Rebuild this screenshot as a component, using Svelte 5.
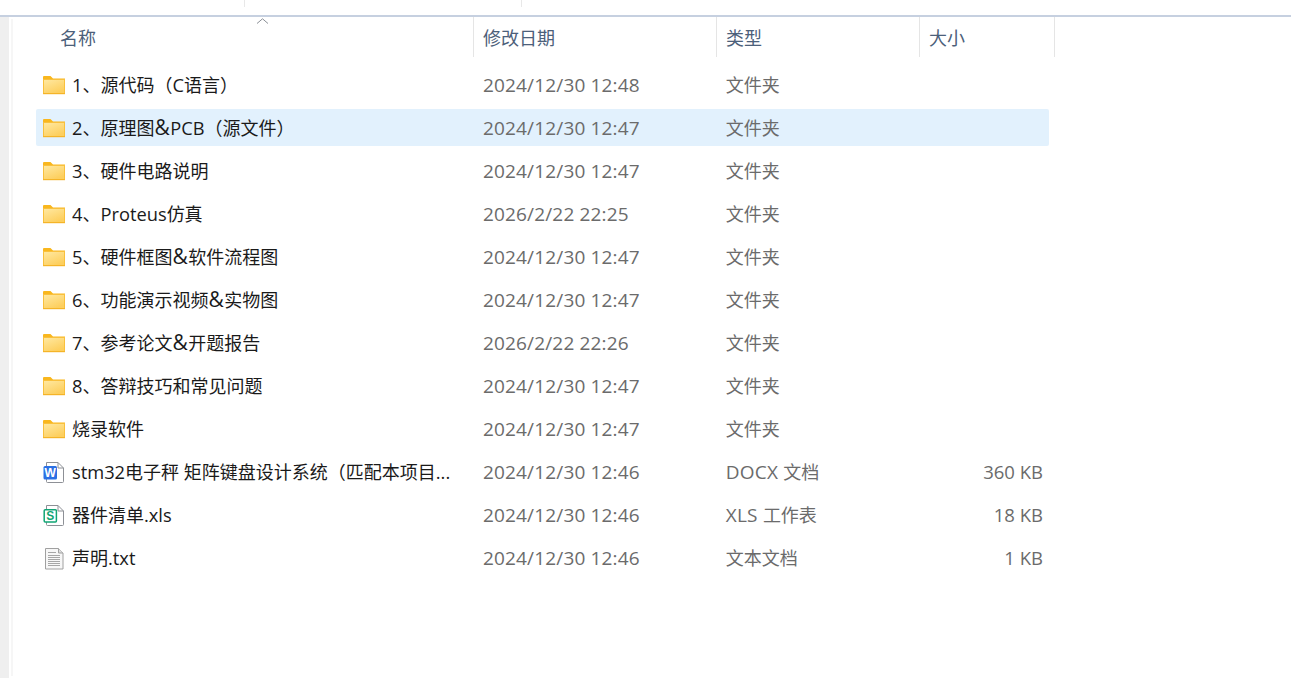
<script>
const rows = [
  { name: '1、源代码（C语言）', date: '2024/12/30 12:48', type: '文件夹', icon: 'folder' },
  { name: '2、原理图&PCB（源文件）', date: '2024/12/30 12:47', type: '文件夹', icon: 'folder', selected: true },
  { name: '3、硬件电路说明', date: '2024/12/30 12:47', type: '文件夹', icon: 'folder' },
  { name: '4、Proteus仿真', date: '2026/2/22 22:25', type: '文件夹', icon: 'folder' },
  { name: '5、硬件框图&软件流程图', date: '2024/12/30 12:47', type: '文件夹', icon: 'folder' },
  { name: '6、功能演示视频&实物图', date: '2024/12/30 12:47', type: '文件夹', icon: 'folder' },
  { name: '7、参考论文&开题报告', date: '2026/2/22 22:26', type: '文件夹', icon: 'folder' },
  { name: '8、答辩技巧和常见问题', date: '2024/12/30 12:47', type: '文件夹', icon: 'folder' },
  { name: '烧录软件', date: '2024/12/30 12:47', type: '文件夹', icon: 'folder' },
  { name: 'stm32电子秤 矩阵键盘设计系统（匹配本项目...', date: '2024/12/30 12:46', type: 'DOCX 文档', size: '360 KB', icon: 'word' },
  { name: '器件清单.xls', date: '2024/12/30 12:46', type: 'XLS 工作表', size: '18 KB', icon: 'sheet' },
  { name: '声明.txt', date: '2024/12/30 12:46', type: '文本文档', size: '1 KB', icon: 'text' }
];

// latin glyphs run a little wider than the cjk ones
const runs = (text) => text.match(/&|[\x20-\x25\x27-\x7e]+|[^\x20-\x7e]+/g) ?? [];
const isLatin = (part) => /^[\x20-\x7e]/.test(part);
</script>

{#snippet mixed(text)}
  <span class="strut"></span>{#each runs(text) as part}{#if isLatin(part)}<span class="latin" class:amp={part === '&'}>{part}</span>{:else}{part}{/if}{/each}
{/snippet}

<div class="window">
  <div class="toolbar">
    <span class="tick first"></span>
    <span class="tick second"></span>
  </div>
  <div class="body">
    <div class="gutter"></div>
    <div class="main">
      <div class="header">
        <div class="col name head">
          名称
          <svg class="sort" width="13" height="6" viewBox="0 0 13 6"><path d="M1 5.5 6.5 .8 12 5.5" fill="none" stroke="#8a8f96" stroke-width="1"/></svg>
        </div>
        <div class="col date head"><span class="strut"></span>修改日期</div>
        <div class="col type head"><span class="strut"></span>类型</div>
        <div class="col size head"><span class="strut"></span>大小</div>
      </div>
      <div class="list">
        {#each rows as row}
          <div class="row" class:selected={row.selected}>
            <div class="file">
              {#if row.icon === 'folder'}
                <svg width="22" height="25" viewBox="0 0 22 25">
                  <defs>
                    <linearGradient id="folder-fill" x1="0" y1="0" x2="0.6" y2="1">
                      <stop offset="0" stop-color="#ffe8a0"/>
                      <stop offset="1" stop-color="#fdcf5e"/>
                    </linearGradient>
                  </defs>
                  <path d="M0 5a1 1 0 0 1 1-1h6.5l2.5 2.5h12v2H0z" fill="#f9b71e"/>
                  <rect y="7" width="22" height="15" fill="#f9c03c"/>
                  <rect x="1" y="8" width="20" height="13" fill="url(#folder-fill)"/>
                  <rect y="21" width="22" height="1.2" fill="#f5b428"/>
                </svg>
              {:else if row.icon === 'word'}
                <svg width="22" height="25" viewBox="0 0 22 25">
                  <path d="M3.5 3.5h11.5l5.5 5.5v13.5a1 1 0 0 1-1 1h-15a1 1 0 0 1-1-1z" fill="#fff" stroke="#8d9096"/>
                  <path d="M15 3.5v5.5h5.5" fill="none" stroke="#8d9096"/>
                  <rect x=".5" y="7" width="13.5" height="13.5" rx="1.5" fill="#2b70e4"/>
                  <text x="7.2" y="17.6" class="badge">W</text>
                </svg>
              {:else if row.icon === 'sheet'}
                <svg width="22" height="25" viewBox="0 0 22 25">
                  <path d="M3.5 3.5h11.5l5.5 5.5v13.5a1 1 0 0 1-1 1h-15a1 1 0 0 1-1-1z" fill="#fff" stroke="#8d9096"/>
                  <path d="M15 3.5v5.5h5.5" fill="none" stroke="#8d9096"/>
                  <rect x="1.2" y="7.7" width="12.2" height="12.2" rx="1" fill="#fff" stroke="#10a574" stroke-width="1.5"/>
                  <text x="7.3" y="17.8" class="badge green">S</text>
                </svg>
              {:else}
                <svg width="22" height="25" viewBox="0 0 22 25">
                  <path d="M2.5 3.5h13l4.5 4.5v16h-17.5z" fill="#f7f7f7" stroke="#a0a0a0"/>
                  <path d="M15.5 3.5v4.5h4.5" fill="#dedede" stroke="#a0a0a0"/>
                  <path d="M5 7.5h8M5 10.5h12M5 12.5h12M5 14.5h12M5 16.5h12M5 18.5h12M5 20.5h12" stroke="#a6a6a6"/>
                </svg>
              {/if}
              <span class="label">{@render mixed(row.name)}</span>
            </div>
            <div class="col date">{@render mixed(row.date)}</div>
            <div class="col type">{@render mixed(row.type)}</div>
            <div class="col size">{@render mixed(row.size ?? '')}</div>
          </div>
        {/each}
      </div>
    </div>
  </div>
</div>

<style>
:global(body) {
  margin: 0;
  background: #fff;
}

.window {
  width: 1291px;
  height: 678px;
  overflow: hidden;
  font-family: "Open Sans", "Noto Sans CJK SC", sans-serif;
  font-size: 18px;
  color: #1a1a1a;
}

.toolbar {
  display: flex;
  height: 15px;
  border-bottom: 2px solid #c6d0e0;
}

.tick {
  width: 1px;
  height: 7px;
  background: #e8e8e8;
}

.first {
  margin-left: 244px;
}

.second {
  margin-left: 276px;
}

.body {
  display: flex;
}

.gutter {
  width: 9px;
  height: 661px;
  flex: none;
  background: #efefef;
  border-right: 2px solid #fff;
  box-shadow: 4px 0 0 -2px #f6f6f6;
}

.main {
  flex: 1;
}

.header {
  display: flex;
  height: 40px;
  width: 1044px;
  color: #4c607a;
}

.head {
  padding-top: 8px;
  box-sizing: border-box;
  border-right: 1px solid #e5e5e5;
  position: relative;
  line-height: 26px;
}

.name.head {
  width: 463px;
  padding-left: 49px;
}

.sort {
  position: absolute;
  left: 245px;
  top: 1px;
}

.date {
  width: 243px;
  padding-left: 9px;
  box-sizing: border-box;
}

.type {
  width: 203px;
  padding-left: 9px;
  box-sizing: border-box;
}

.size {
  width: 135px;
  padding-left: 9px;
  box-sizing: border-box;
}

.list {
  display: flex;
  flex-direction: column;
  gap: 6px;
  padding: 9px 0 0 25px;
}

.row {
  display: flex;
  align-items: center;
  width: 1013px;
  height: 37px;
  border-radius: 2px;
}

.selected {
  background: #e2f1fd;
}

.file {
  display: flex;
  align-items: center;
  gap: 7px;
  width: 438px;
  padding-left: 7px;
  box-sizing: border-box;
  white-space: nowrap;
}

.file svg {
  flex: none;
}

.strut {
  font-size: 19px;
}

.label .latin {
  font-size: 18.3px;
}

.label .amp {
  font-size: 21px;
  line-height: 0;
  letter-spacing: 0.5px;
}

.row .col {
  color: #6b6b6b;
}

.row .date,
.row .type {
  padding-left: 9.5px;
}

.date .latin {
  font-size: 19px;
  letter-spacing: 0.15px;
}

.type .latin {
  font-size: 19px;
  letter-spacing: 0.2px;
}

.row .size {
  width: 130px;
  text-align: right;
  padding: 0 6px 0 0;
}

.size .latin {
  font-size: 18.5px;
}

.badge {
  font-family: "Liberation Sans", sans-serif;
  font-size: 12px;
  font-weight: 700;
  text-anchor: middle;
  fill: #fff;
}

.green {
  fill: #10a574;
}
</style>
